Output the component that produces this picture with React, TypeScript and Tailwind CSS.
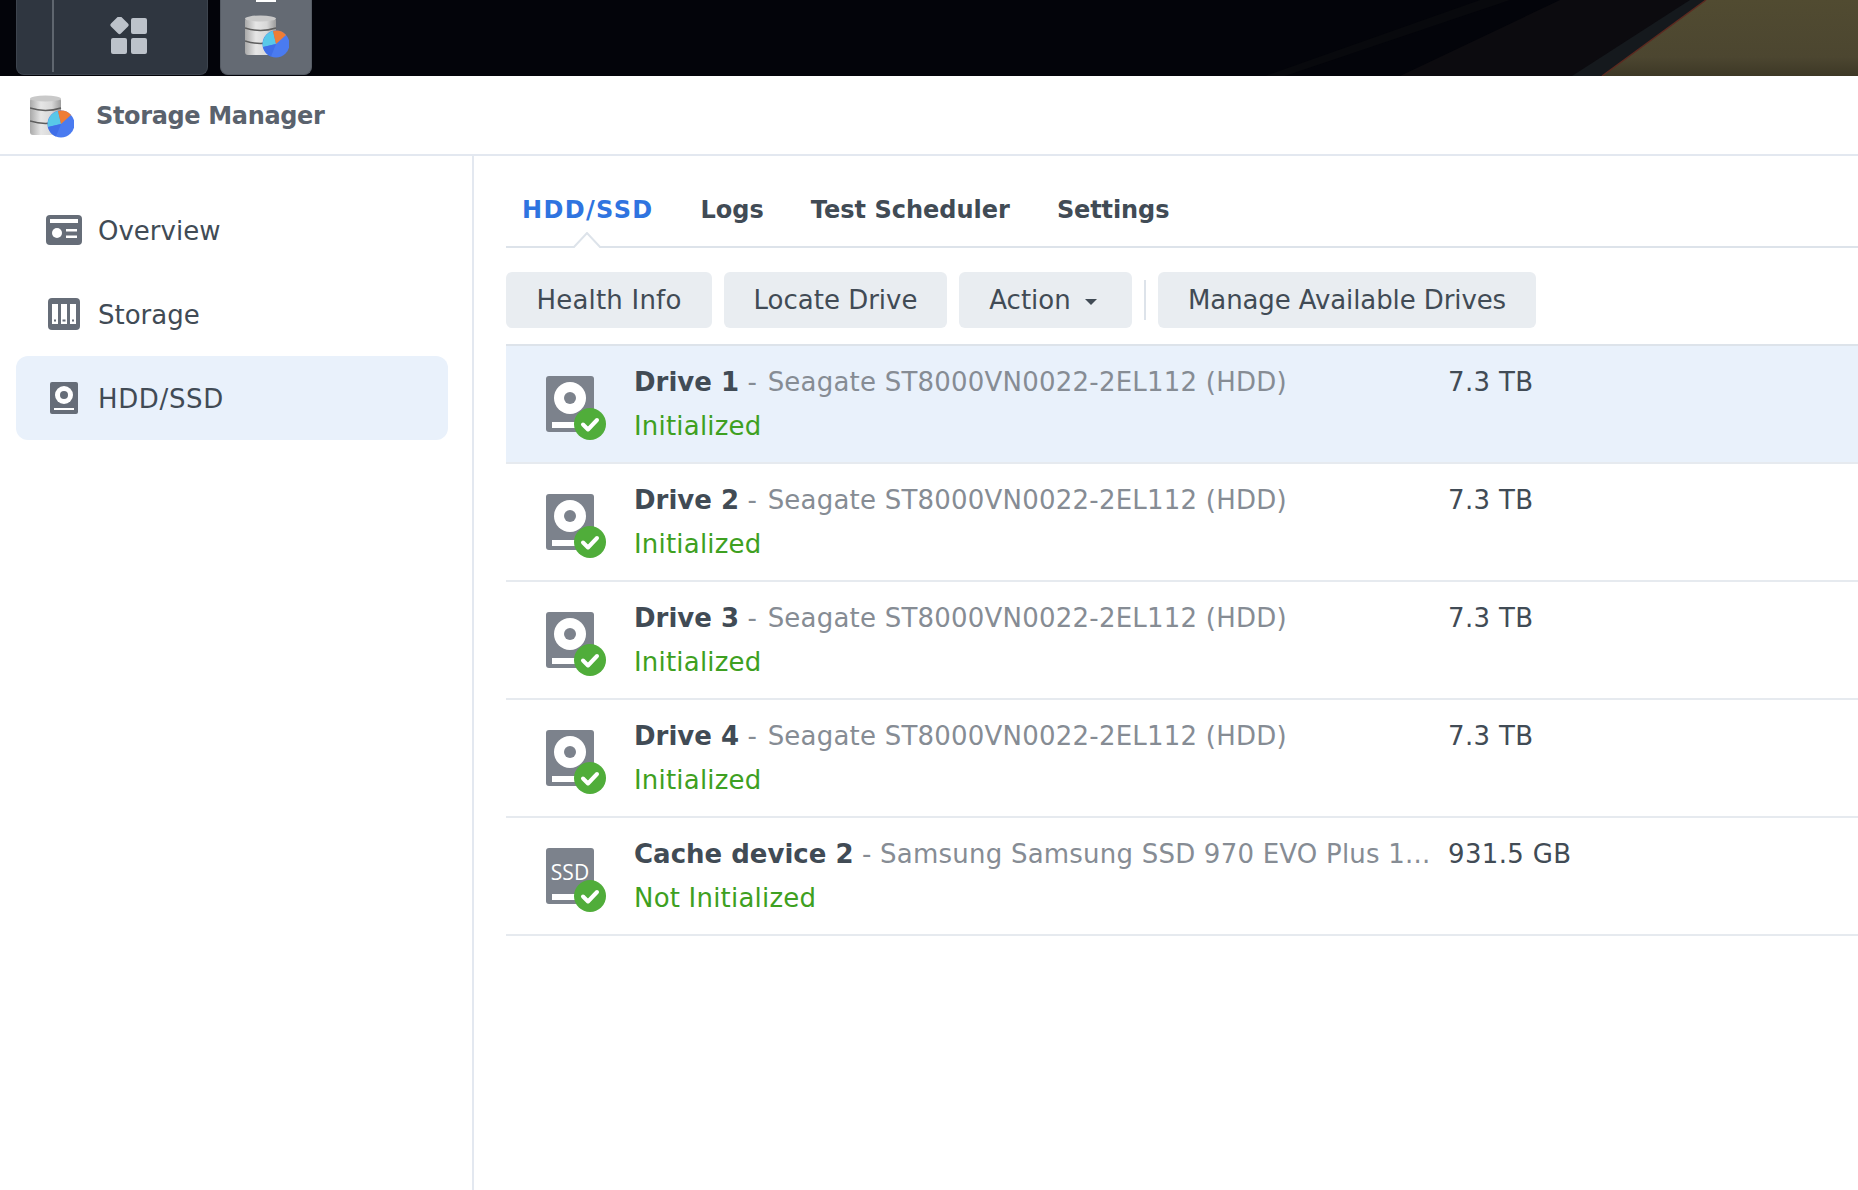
const font = 'font-["DejaVu_Sans",sans-serif]';

const drives = [
  { name: 'Drive 1', model: 'Seagate ST8000VN0022-2EL112 (HDD)', size: '7.3 TB', status: 'Initialized', kind: 'hdd' },
  { name: 'Drive 2', model: 'Seagate ST8000VN0022-2EL112 (HDD)', size: '7.3 TB', status: 'Initialized', kind: 'hdd' },
  { name: 'Drive 3', model: 'Seagate ST8000VN0022-2EL112 (HDD)', size: '7.3 TB', status: 'Initialized', kind: 'hdd' },
  { name: 'Drive 4', model: 'Seagate ST8000VN0022-2EL112 (HDD)', size: '7.3 TB', status: 'Initialized', kind: 'hdd' },
  { name: 'Cache device 2', model: 'Samsung Samsung SSD 970 EVO Plus 1...', size: '931.5 GB', status: 'Not Initialized', kind: 'ssd' },
];

function StorageLogo({ className }: { className: string }) {
  return (
    <svg viewBox="0 0 44 44" className={className}>
      <defs>
        <linearGradient id="can" x1="0" x2="1" y1="0" y2="0">
          <stop offset="0" stopColor="#a9a9a9" />
          <stop offset="0.35" stopColor="#e6e6e6" />
          <stop offset="0.7" stopColor="#d8d8d8" />
          <stop offset="1" stopColor="#9c9c9c" />
        </linearGradient>
      </defs>
      <rect x="0" y="3" width="31" height="37" rx="3" fill="url(#can)" />
      <ellipse cx="15.5" cy="3.5" rx="15.5" ry="3" fill="#c9c9c9" />
      <path d="M0 13q15.5 5 31 0" stroke="#5d5d5d" strokeWidth="1.6" fill="none" />
      <path d="M0 26q15.5 5 31 0" stroke="#5d5d5d" strokeWidth="1.6" fill="none" />
      <circle cx="31" cy="29" r="13.5" fill="#4a7bf0" />
      <path d="M31 29L18 32A13.5 13.5 0 0 1 28 16Z" fill="#58c8e8" />
      <path d="M31 29L28 16A13.5 13.5 0 0 1 41 20Z" fill="#ef7d35" />
      <path d="M31 29L18 32A13.5 13.5 0 0 0 26 41.5Z" fill="#3f6ee8" />
    </svg>
  );
}

function DriveIcon({ kind }: { kind: string }) {
  return (
    <svg viewBox="0 0 60 64" className="w-[60px] h-[64px] shrink-0 mt-[7px]">
      <rect x="0" y="0" width="48" height="56" rx="3" fill="#7c828c" />
      {kind === 'hdd' ? (
        <>
          <circle cx="24" cy="22" r="16" fill="#ffffff" />
          <circle cx="24" cy="22" r="6" fill="#7c828c" />
        </>
      ) : (
        <text x="24" y="32" textAnchor="middle" fill="#ffffff" fontSize="21" fontFamily="'Open Sans', sans-serif">SSD</text>
      )}
      <rect x="6" y="46" width="26" height="6" fill="#ffffff" />
      <circle cx="44" cy="48" r="16" fill="#50ad3a" />
      <path d="M37 48.5l5 5 9-9.5" stroke="#ffffff" strokeWidth="4" fill="none" strokeLinecap="round" strokeLinejoin="round" />
    </svg>
  );
}

function NavItem({ label, active, children }: { label: string; active?: boolean; children: React.ReactNode }) {
  return (
    <div className={`flex items-center h-[84px] rounded-[12px] ${active ? 'bg-[#e9f1fb]' : ''}`}>
      <div className="w-[82px] flex justify-center pl-[14px]">{children}</div>
      <span className={`text-[26px] text-[#414b55] pt-[2px] ${active ? 'tracking-[0.65px]' : ''}`}>{label}</span>
    </div>
  );
}

function ToolButton({ className, children }: { className: string; children: React.ReactNode }) {
  return (
    <button className={`h-[56px] rounded-[6px] bg-[#e9edf1] text-[26px] text-[#414b55] flex items-center justify-center ${className}`}>
      {children}
    </button>
  );
}

export default function App() {
  return (
    <div className={`w-[1858px] h-[1190px] overflow-hidden bg-white flex flex-col ${font}`}>
      {/* taskbar over the wallpaper */}
      <div className="relative h-[76px] shrink-0 bg-[#03040a] flex items-stretch pl-[16px] gap-[12px]">
        <svg viewBox="0 0 1858 76" className="absolute inset-0 w-full h-full">
          <defs>
            <linearGradient id="sand" x1="0" x2="0" y1="0" y2="1">
              <stop offset="0" stopColor="#514b31" />
              <stop offset="0.75" stopColor="#4c4630" />
              <stop offset="1" stopColor="#3d3826" />
            </linearGradient>
          </defs>
          <path d="M1480 0L1265 76H1285L1510 0Z" fill="#08090d" />
          <path d="M1560 0L1400 76H1590L1690 0Z" fill="#0c0b0f" />
          <path d="M1690 0L1572 76H1602L1706 0Z" fill="#15191d" />
          <path d="M1706 0H1858V76H1602Z" fill="url(#sand)" />
          <path d="M1706 0L1602 76" stroke="#5c2a20" strokeWidth="1.5" />
        </svg>
        <div className="relative w-[192px] h-[75px] rounded-b-[8px] bg-[#2f3640] border border-t-0 border-[#3d444e] flex">
          <div className="w-[37px] border-r-2 border-[#5f666f] h-[72px]" />
          <div className="flex-1 flex items-start justify-center pt-[17px] pr-[4px]">
            <svg viewBox="0 0 38 38" className="w-[38px] h-[38px]">
              <rect x="2.5" y="1" width="14" height="14" rx="2" transform="rotate(45 9.5 8)" fill="#bcc2ca" />
              <rect x="21" y="1" width="16" height="16" rx="2" fill="#bcc2ca" />
              <rect x="1" y="21" width="16" height="16" rx="2" fill="#bcc2ca" />
              <rect x="21" y="21" width="16" height="16" rx="2" fill="#bcc2ca" />
            </svg>
          </div>
        </div>
        <div className="relative w-[92px] h-[75px] rounded-b-[8px] bg-[#646a73] border border-t-0 border-[#565c65] flex justify-center pt-[15px] pl-[1px]">
          <div className="absolute top-0 left-[35px] w-[20px] h-[2px] bg-white" />
          <StorageLogo className="w-[44px] h-[44px]" />
        </div>
      </div>

      {/* app title */}
      <div className="h-[80px] shrink-0 border-b-2 border-[#e3e8f0] flex items-center pl-[30px] pt-[3px]">
        <StorageLogo className="w-[44px] h-[44px]" />
        <span className="ml-[22px] mb-[2px] text-[24px] tracking-[-0.35px] font-bold text-[#5a626d]">Storage Manager</span>
      </div>

      <div className="flex flex-1 min-h-0">
        {/* sidebar */}
        <div className="w-[474px] shrink-0 border-r-2 border-[#e3e8f0] pt-[32px] pl-[16px] pr-[24px]">
          <NavItem label="Overview">
            <svg viewBox="0 0 36 30" className="w-[36px] h-[30px]">
              <rect width="36" height="30" rx="4" fill="#666d78" />
              <rect x="4" y="4" width="28" height="4" fill="#ffffff" />
              <circle cx="11" cy="18" r="5" fill="#ffffff" />
              <rect x="20" y="14" width="11" height="2.5" fill="#ffffff" />
              <rect x="20" y="20.5" width="11" height="2.5" fill="#ffffff" />
            </svg>
          </NavItem>
          <NavItem label="Storage">
            <svg viewBox="0 0 32 32" className="w-[32px] h-[32px]">
              <rect width="32" height="32" rx="4" fill="#666d78" />
              <rect x="4" y="6" width="6" height="20" fill="#ffffff" />
              <rect x="13" y="6" width="6" height="20" fill="#ffffff" />
              <rect x="22" y="6" width="6" height="20" fill="#ffffff" />
              <rect x="6" y="21.5" width="2" height="2" fill="#666d78" />
              <rect x="14.5" y="21.5" width="3" height="2" fill="#666d78" />
              <rect x="24" y="21.5" width="2" height="2" fill="#666d78" />
            </svg>
          </NavItem>
          <NavItem label="HDD/SSD" active>
            <svg viewBox="0 0 28 32" className="w-[28px] h-[32px]">
              <rect width="28" height="32" rx="2" fill="#666d78" />
              <circle cx="14" cy="13" r="9" fill="#ffffff" />
              <circle cx="14" cy="13" r="4" fill="#666d78" />
              <rect x="4" y="26" width="20" height="2" fill="#ffffff" />
            </svg>
          </NavItem>
        </div>

        {/* content */}
        <div className="flex-1 min-w-0 pl-[32px]">
          <div className="relative h-[92px] border-b-2 border-[#dde3ea] flex items-center gap-[47px] pl-[16px] pt-[17px] text-[24px] font-bold text-[#414b55]">
            <span className="text-[#2f74e0] tracking-[1.35px]">HDD/SSD</span>
            <span>Logs</span>
            <span>Test Scheduler</span>
            <span className="tracking-[-0.1px]">Settings</span>
            <svg viewBox="0 0 28 16" className="absolute left-[67px] bottom-[-2px] w-[28px] h-[16px]">
              <path d="M0 15H1L14 1L27 15H28V16H0Z" fill="#ffffff" />
              <path d="M0 15H1L14 1L27 15H28" stroke="#dde3ea" strokeWidth="2" fill="none" />
            </svg>
          </div>

          <div className="flex items-center gap-[12px] mt-[24px] mb-[16px]">
            <ToolButton className="w-[206px] tracking-[0.2px]">Health Info</ToolButton>
            <ToolButton className="w-[223px]">Locate Drive</ToolButton>
            <ToolButton className="w-[173px] pr-[5px]">
              Action
              <svg viewBox="0 0 12 6" className="w-[12px] h-[6px] ml-[14px] mt-[4px]">
                <path d="M0 0H12L6 6Z" fill="#414b55" />
              </svg>
            </ToolButton>
            <div className="w-[2px] h-[40px] bg-[#dde3ea]" />
            <ToolButton className="w-[378px] tracking-[-0.1px]">Manage Available Drives</ToolButton>
          </div>

          <div className="border-t-2 border-[#dde3ea]">
            {drives.map((d, i) => (
              <div
                key={d.name}
                className={`h-[118px] border-b-2 border-[#e6eaef] flex items-center pl-[40px] ${i === 0 ? 'bg-[#e9f1fb]' : ''}`}
              >
                <DriveIcon kind={d.kind} />
                <div className="w-[814px] ml-[28px] shrink-0 pr-[16px]">
                  <div className="text-[26px] leading-[44px] whitespace-nowrap">
                    <span className="font-bold text-[#414b55]">{d.name}</span>
                    <span className="text-[#868c94] tracking-[0.22px]"> - </span>
                    <span className={`text-[#868c94] tracking-[0.22px] ${d.kind === 'hdd' ? 'ml-[2px]' : ''}`}>{d.model}</span>
                  </div>
                  <div className="text-[26px] leading-[44px] tracking-[0.2px] text-[#3ea021]">{d.status}</div>
                </div>
                <div className="text-[26px] tracking-[0.35px] text-[#414b55] self-start pt-[17px]">{d.size}</div>
              </div>
            ))}
          </div>
        </div>
      </div>
    </div>
  );
}
